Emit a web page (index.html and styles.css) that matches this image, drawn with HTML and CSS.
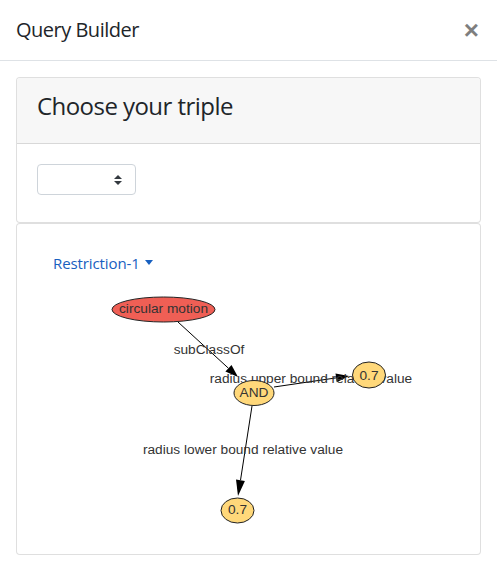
FILE: index.html
```html
<!DOCTYPE html>
<html lang="en">
<head>
<meta charset="utf-8">
<title>Query Builder</title>
<link rel="stylesheet" href="styles.css">
</head>
<body>
<div class="modal">
  <div class="modal-header">
    <h5 class="modal-title">Query Builder</h5>
    <button class="close" type="button">×</button>
  </div>
  <div class="modal-body">
    <div class="card">
      <div class="card-header"><h3 class="card-title">Choose your triple</h3></div>
      <div class="card-body card-body-select">
        <div class="select">
          <svg class="select-arrow" width="8" height="10" viewBox="0 0 4 5"><path d="M2 0L0 2h4zm0 5L0 3h4z" fill="#343a40"/></svg>
        </div>
      </div>
    </div>
    <div class="card">
      <div class="card-body">
        <ul class="nav">
          <li class="nav-item"><a class="nav-link dropdown-toggle">Restriction-1</a></li>
        </ul>
        <svg class="graph" width="424" height="250" viewBox="37 284 424 250">
          <g class="edges" stroke="#000" stroke-width="1" fill="#000">
            <line x1="178" y1="322" x2="228.4" y2="368.2"/>
            <polygon points="238,377 225.4,371.5 231.5,364.9" stroke="none"/>
            <line x1="274" y1="387" x2="336.1" y2="377.9"/>
            <polygon points="349,376 336.8,382.3 335.5,373.4" stroke="none"/>
            <line x1="252" y1="406" x2="240.5" y2="480.2"/>
            <polygon points="238,496 244.9,480.9 236,479.5" stroke="none"/>
          </g>
          <g class="labels">
            <text x="209" y="354">subClassOf</text>
            <text x="311" y="383">radius upper bound relative value</text>
            <text x="243" y="454">radius lower bound relative value</text>
          </g>
          <g class="nodes">
            <ellipse class="node-red" cx="163.5" cy="309.5" rx="51.5" ry="12.5"/>
            <text x="163.5" y="313">circular motion</text>
            <ellipse class="node-yellow" cx="254" cy="393" rx="20" ry="12.5"/>
            <text x="254" y="397">AND</text>
            <ellipse class="node-yellow" cx="369" cy="375" rx="16.5" ry="13"/>
            <text x="369" y="380">0.7</text>
            <ellipse class="node-yellow" cx="237.5" cy="510.5" rx="16.5" ry="12.5"/>
            <text x="237.5" y="514">0.7</text>
          </g>
        </svg>
      </div>
    </div>
  </div>
</div>
</body>
</html>
```

FILE: styles.css
```css
* { box-sizing: border-box; }
html, body { margin: 0; padding: 0; background: #fff; }
body {
  font-family: "Open Sans", "Noto Sans", sans-serif;
  color: #212529;
  font-size: 16px;
  line-height: 1.5;
}
.modal { width: 497px; background: #fff; }
.modal-header {
  display: flex;
  align-items: center;
  justify-content: space-between;
  height: 61px;
  padding: 0 16px 1px 16px;
  border-bottom: 1px solid #dee2e6;
}
.modal-title {
  margin: 0;
  font-size: 20px;
  font-weight: 400;
  line-height: 30px;
  letter-spacing: -0.5px;
}
.close {
  background: none;
  border: 0;
  padding: 0;
  margin: 0 2px 0 0;
  font-family: "Liberation Sans", Arial, sans-serif;
  font-size: 26px;
  font-weight: 700;
  line-height: 1;
  color: #000;
  opacity: .5;
  text-shadow: 0 1px 0 #fff;
}
.modal-body { padding: 16px; }
.card {
  border: 1px solid rgba(0,0,0,.125);
  border-radius: 4px;
  background: #fff;
}
.card-header {
  background: #f7f7f7;
  border-bottom: 1px solid rgba(0,0,0,.125);
  padding: 12px 20px;
  border-radius: 3px 3px 0 0;
  height: 66px;
}
.card-title {
  margin: 0;
  font-size: 24px;
  font-weight: 400;
  line-height: 32px;
  letter-spacing: -0.55px;
}
.card-body { padding: 20px; }
.card-body-select { padding: 20px 20px 27px; }
.select {
  width: 99px;
  height: 31px;
  border: 1px solid #ced4da;
  border-radius: 4px;
  position: relative;
  background: #fff;
}
.select-arrow { position: absolute; right: 13px; top: 10px; }
.nav { list-style: none; margin: 0; padding: 0; display: flex; }
.nav-link {
  display: block;
  padding: 7px 16px 9px;
  color: #1860c0;
  font-size: 15px;
  line-height: 24px;
  text-decoration: none;
  letter-spacing: -0.1px;
}
.dropdown-toggle::after {
  content: "";
  display: inline-block;
  margin-left: 5px;
  vertical-align: 4px;
  border-top: 5px solid;
  border-right: 4px solid transparent;
  border-left: 4px solid transparent;
}
.graph { display: block; }
.graph text {
  font-family: "Liberation Sans", Arial, sans-serif;
  font-size: 13.7px;
  fill: #333;
  text-anchor: middle;
}
.node-red { fill: #ef5f55; stroke: #222; stroke-width: 1; }
.node-yellow { fill: #ffd87a; stroke: #222; stroke-width: 1; }
```
